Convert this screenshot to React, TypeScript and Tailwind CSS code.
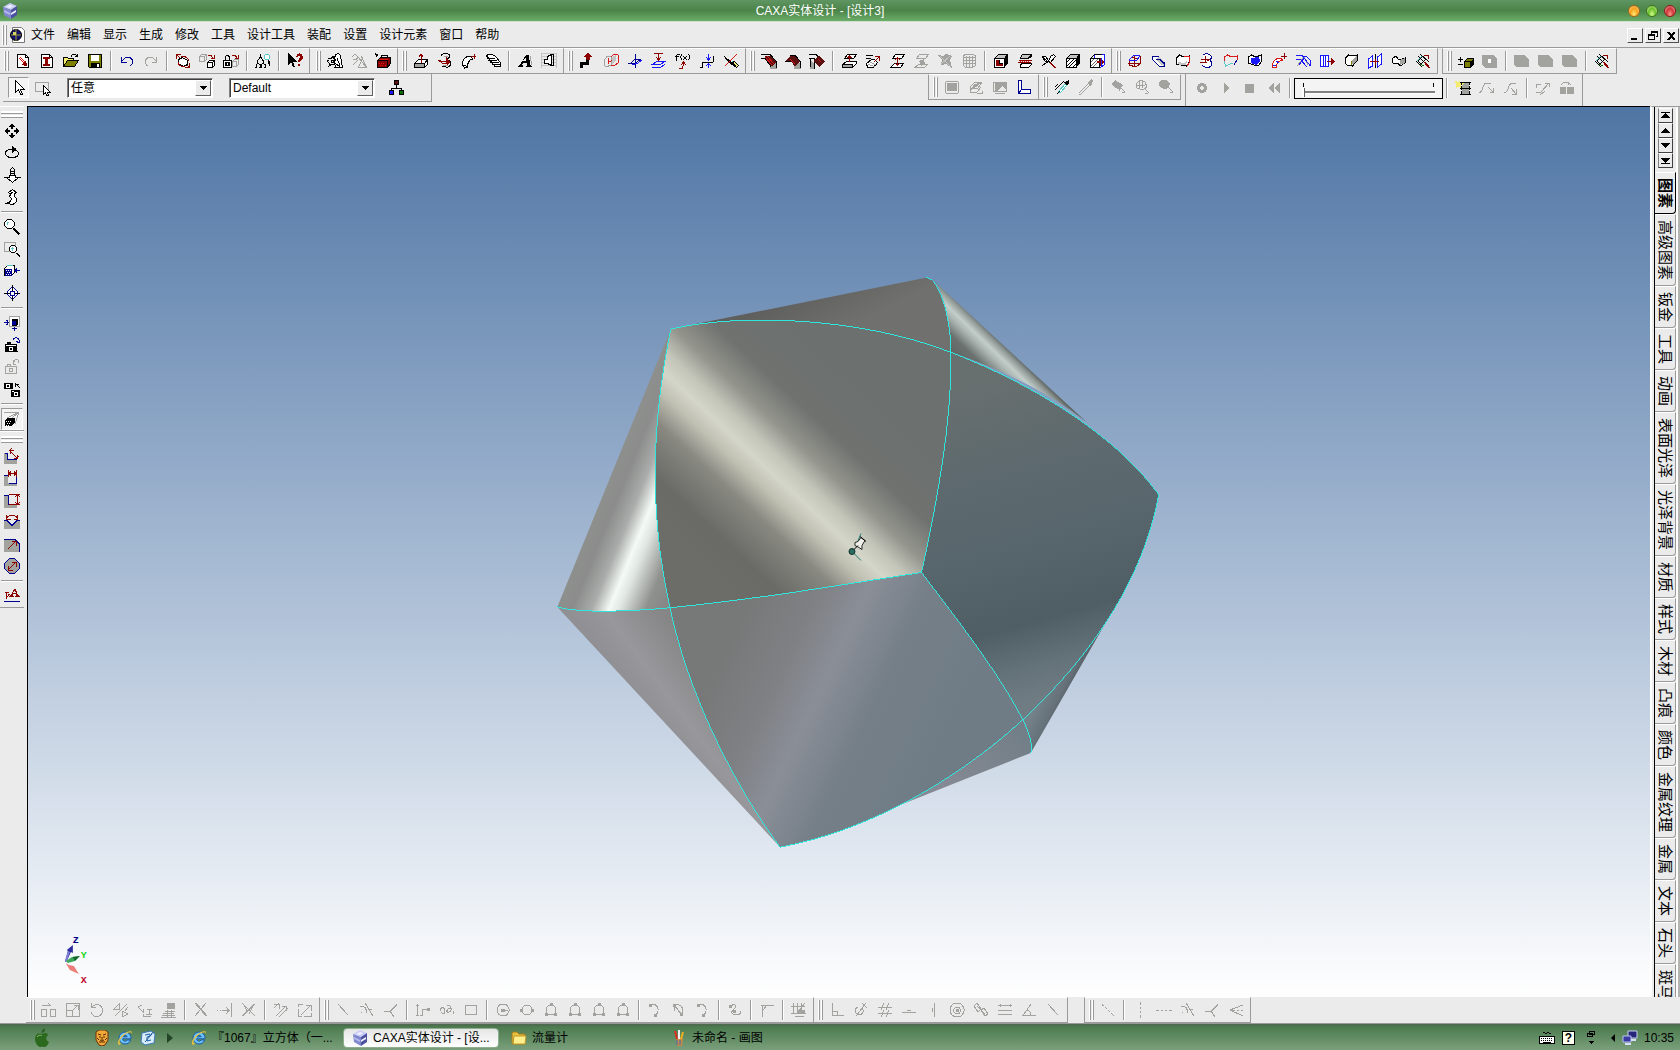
import { Fragment, useState } from "react";
import { clsx } from "clsx";

/* Glyph art: parts split by "|", each one is "<stroke><fill> <path>" on a 16x16 grid */
const INK: Record<string, string> = {
  "-": "none",
  k: "#000000",
  w: "#ffffff",
  r: "#8c0000",
  e: "#d81818",
  m: "#5c1010",
  b: "#000090",
  u: "#1818f8",
  n: "#a2a29e",
  l: "#c4c4c4",
  d: "#686868",
  y: "#808000",
  o: "#f4ec70",
  g: "#007000",
  c: "#58c8c8",
  p: "#a04070",
};

const art = {
  newDesign: "kw M2.5 1.5h8l3 3v10h-11z|k- M10.5 1.5v3h3|e- M4 5l6 6M5 4l6 6|-r M12 13l-6-1 5-5z",
  newSheet: "kw M2.5 1.5h8l3 3v10h-11z|k- M10.5 1.5v3h3|-r M4 4h7v2h-2v5h2v2h-7v-2h2v-5h-2z",
  open: "ko M.5 13.5v-9h4l1 1h5v3|ky M.5 13.5l4-6h11l-4 6z|k- M8 3.5c1-3 4-3 6-1M14.5 .5v3h-3",
  save: "ky M1.5 1.5h13v13h-12l-1-1z|-w M4 2h8v6h-8z|-k M4 10h9v4h-9z|-w M10 11h2v3h-2z",
  undo: "b- M2.5 4v5h5M2.5 9c2-4 6-6 9-4 3 2 3 5 0 8",
  redo: "n- M13.5 4v5h-5M13.5 9c-2-4-6-6-9-4-3 2-3 5 0 8",
  sizeBox: "r- M1.5 6V1.5H6M10 14.5h4.5V10M2 2l3 3M11 11l3 3|kw M3.5 6.5l4-2 5 3v4l-4 2-5-3z|r- M3 9c0 4 4 5 7 4M6 4c4-1 7 1 8 4",
  copyCubes: "n- M.5 3.5l2-2h5v5l-2 2h-5zM.5 3.5h5v5M5.5 3.5l2-2|kw M8.5 9.5l2-2h5v5l-2 2h-5z|k- M8.5 9.5h5v5M13.5 9.5l2-2|r- M9 2h3l2 4M12 5h3v-3",
  lockCube: "kw M.5 7.5h8v7h-8z|-k M2 9h5v4h-5z|-w M4 10h1v2h-1z|k- M2.5 7v-3c1-2 3-2 4 0v3|n- M9.5 8.5l2-2h4v5l-2 2h-4zM9.5 8.5h4v5|r- M9 2h3l2 3M12 5h3v-3",
  treeFind: "k- M5.5 1v3M5.5 4l-3 4v2M5.5 4l3 4v2M1 14.5v-3l2-1 2 1v3M6 14.5v-3l2-1 2 1v3M0 14.5h2M4 14.5h3M9 14.5h2|cw M10.5 1.5h3l1 1v3l-1 1h-3l-1-1v-3z|k- M13 7v4M14 8v5",
  help: "-k M1 0v12l3-3 2 5h2l-2-5h4z|-r M9 4c0-5 7-5 7 0 0 3-3 3-3 5h-2c0-3 2-3 2-5 0-2-2-1-2 0z|-r M11 11h2v2h-2z",
  gearCalc: "kw M7.5 5.5l1-4 3-1 2 2 2 12h-8l2-3-3-2z|k- M1 5l3 1 2-3 1 3 2 1-2 2 1 3-3-1-3 2 0-3-2-2 2-1M4 7h2v2H4zM10 5l3 8M8 10l5 4M1 14l4-3",
  gearGray: "n- M1 4l3-3 3 3-2 3-3-1M7 4l8 10M15.5 14.5h-8l4-9z|n- M2 12l5-5M10 3l4 8",
  toolbox: "kr M2.5 7.5l3-3h10v6l-3 4h-10z|k- M2.5 7.5h10v7|e- M4 6h9M4 10h1M6 10h1M8 10h1M5 12h1M7 12h1M10 12h1|k- M6 4.5v-2h6v2|-k M0 0l4 2-3 2z",
  extrude: "kw M1.5 10.5l4-4h9v5l-3 3h-10z|-n M2 11h9v3H2z|k- M1.5 10.5h10v4M11.5 10.500l3-4|r- M8 9V2M5.5 4.500L8 1l2.500 3.500|-r M8 2h1v8H8z",
  spin: "k- M4 3c0-3 9-3 9 0 0 2-3 2-3 4h2c3 2 2 8-3 7l-4-1|r- M1 7h2l2 3h6M9 4v5c-3 0-7 0-8-2|-r M10 6l4 3-4 3z|n- M6 12h5M7 3h4",
  sweep: "kw M1.5 12c0-6 3-9 8-9l2 3c-4 1-5 4-5 8l-3 1z|k- M1 12h3l2 2|r- M10 3.500h5M13.500 1v5",
  loft: "kw M1.5 3.5c1-3 6-3 9 0l5 6v4h-5z|k- M2 5h8M3 7h9M5 9h9M7 11h8M2 3l4 6M9 13h5",
  text: "-k M1 14v-1l2-1 6-10h3l1 10 2 1v1h-6v-1l1-1v-2h-4l-1 2 1 1v1zM6 8h3v-4z|n- M13.500 3l1 9",
  emboss: "l- M0 .5h16M0 3.500h16M0 6.500h16M0 9.500h16M0 12.500h16M.5 0v15M15.500 0v15|kw M3.5 6.5h3v-3l4-2v11l-4-2h-3z|k- M10.5 1.5h2v11h-2",
  bend: "-k M1 9h6v-3h3v6h-6v3h-3z|-r M7 6v-2h-3l5-4 5 4h-3v3h-3z",
  surfFold: "n- M1 8l3-5 4 1v8l-5 2-2-2z|e- M8 4l3-3 4 1v8l-4 3-3-1M5 5v6M5 9l6-2|-l M9 4l4-2v6l-4 3z",
  plane: "b- M1 10.500h7l5-4h-5M8.5 15V1M8 6l-4 4|u- M5 12l6-2 4-3",
  planes: "r- M3 .5h9M7.5 1v7M5 4l2.5 3L10 4|u- M1 11.5h8l5-3H6zM1 14.5h8l5-3",
  fx: "k- M1.500 8V3l1-2h2M0 3.5h4M6.5 1c-1 2-1 4 0 6M8 3l4 4M12 3L8 7M13.5 1c2 2 2 4 0 6|r- M8.5 9v4M6 12l2.5-3 2.5 3M4 15.500h3l1-2",
  align: "u- M9.500 1v5M7 4l2.500 3 2.500-3M9.500 15v-4M7 13l2.500-2 2.500 2|k- M1 14.5h2v-5h11M14.5 9V3",
  cut: "k- M1 3l12 11M2 5l10 9|e- M14 1L2 13|c- M9 8l5 6|ko M9.5 9.5l2-1 4 4-2 2z",
  fillet: "-n M9 9l6.5 1v6H9z|-m M4 3h6l5 6-4 5-6-8z|e- M4 4l7 8M6 3l7 8|k- M0 1.5h9l6.500 7V15M0 5.500h4l6 8",
  chamfer: "-n M9 9l6.500 1v6H9z|-m M1 8l5-6h5l4 6-5 6-4-6z|e- M5 6l5 5|k- M0 8.500h6M5 2.500h5l5.500 6V15",
  shellCut: "-n M1 7l5 4v5H1z|k- M0 1.5h7l3 3M0 5.500h5v10M1 5v9|-m M4 8l6-5 6 5-6 6z|e- M9 6l3 3",
  draft1: "kw M3.5 5.5l3-4h9l-3 4zM1.5 11.500l4-3h10v2l-4 4h-10z|-n M2 12h9v2H2z|k- M1.500 11.500h10v3|r- M8.5 9V3M6.5 5l2-2 2 2",
  draft2: "k- M1 2.5h7M1 5.500h5|kw M1.500 10.500l5-4h3l3 3-4 5h-6z|n- M3 11l7 3M5 9l6 3|r- M9 9l5-5M14.500 8V3.500H10",
  draft3: "kw M3.5 5.5l3-4h9l-3 4z|kw M1.5 14.5l4-4h9l-3 4z|r- M8.500 4v8M6 7l2.500-2L11 7M6 10l2.500 2 2.500-2",
  draft4: "n- M3.5 5.5l3-4h9l-3 4zM1.5 14.5l4-3h9l-3 3z|-n M6 8l5-2 1 5-4 2z",
  meshGray: "-n M1 2l5 1 3-2 6 2-2 4 2 8-6-4-5 1 1-5z|l- M3 3l10 10M13 3L4 11",
  cageGray: "n- M2.5 2.5l2-1h7l3 1v10l-3 2h-7l-2-2zM2.5 4.5h12M2.5 7.5h12M2.500 10.500h12M5.5 3v11M8.5 3v11M11.5 3v11",
  box1: "kl M1.5 5.5l4-4h9l-3 4z|-k M11 5l4-4v9l-4 5z|kw M1.5 5.5h10v9h-10z|-r M3 7h3v4h4v2H3z|k- M6.500 7v3.500h3",
  box2: "kl M3.5 4.5l2-3h9v2l-3 2h-8z|kw M3.5 11.500l2-1h9v1l-3 3h-8z|-k M11 4l4-3v3l-4 2z|r- M2 7.500h13M1 9.500h13|e- M3 8.500h1M5 8.500h1M7 8.500h1M9 8.500h1M11 8.500h1",
  knife: "kw M1.500 3.500l3 0 3 4-1 2-3-2zM9.500 3.500l3-2 2 2-5 6-2-1z|k- M3 5l3 3M1 13l5-4|r- M9 9l6 6M9 10l5 5",
  box4: "kl M1.5 5.5l4-4h9l-3 4z|-k M11 5l4-4v9l-4 5z|kw M1.5 5.5h10v9h-10z|k- M2 9l3-3M2 13l7-7M4 14l7-7M8 14l3-3",
  box5: "uw M5.5 1.5h10v10l-4 3h-4z|kw M1.5 5.5h9v9h-9z|k- M1.5 5.5l4-4h7|d- M2 9l3-3M2 13l7-7M4 14l6-6|-r M8 8h3V5l4 4-4 4v-3H8z|u- M12.5 5v9",
  net: "r- M2 7l5-5 6 1v8l-4 3-7-2zM1 10.500h12M7.500 2v11M4 4l8 2|u- M7 2l6 1-4 5-7-1z",
  sleeve: "bw M1.5 3.5h6l6 6v4h-5l-7-7z|-l M8 4l5 5v4l-5-3-3-4z|b- M5 6.500h4l5 5",
  patch: "kw M1.5 11V5l3-3 4 2 6-1v6l-3 4-5-1z|e- M9 3.5h5.5V9L12 13|-l M3 9l6 1 3-2-1 4H4z",
  spinSurf: "bw M4.500 2c2-3 9 0 8 3-2 2-2 3 0 4v3c0 3-8 3-9 0|r- M2 6.500h5M6.500 3v6M1 9.500h7|-r M7 6h4L9 9z",
  patch2: "e- M1.5 8V4l3-2 4 2 6-1v4|c- M1.5 8l1 5 7-3|b- M14 7l-3 5",
  patchFill: "kw M1.5 10V4l3-2 4 2 6-2v6l-3 5-5-1z|-u M4 5l8-1 1 4-4 4-5-2z",
  sweepSurf: "ew M1.5 14c0-6 3-9 8-9l2 2c-4 1-6 4-6 7z|u- M2 12l3 1M5 8l3 2|r- M10 3.500h6M13.500 0v6",
  bridge: "n- M2 13L9 4l4 8|u- M1 2.500h6l8 10M8 3h3l4 4v6M1 6h4l7 8M4 12l5-7",
  offset: "uw M1.5 2.5h5v11h-5zM6.5 2.5h3v11h-3|u- M4.500 3v10|r- M8 8.500h5|-r M12 5l4 3.500-4 3.500z",
  patchDark: "kw M2.5 10V5l3-3 3 1 6-1v5l-5 6-6-1z|-n M8 8l6-5v4l-4 5z|y- M8.500 8v4",
  mirror: "uw M1.5 6l4-3v10l-4 2zM10.500 4l4-3v10l-4 3z|k- M8.500 1v14|r- M3 8.500h9M8 6v6",
  ribbon: "kw M1 6l4-3 3 4 6-2v5l-5 3-2-3-5 0z|-n M9 7l5-2v5l-5 2z",
  cutSurf: "k- M3 3l11 11M1 8l6 6M5 1l9 8M3 8l5-5 3 3-5 5z|r- M9 2h4v4M10 9l5 6M9 9l5 6|c- M2 8l5-5|g- M5 11l4 2",
  plusBox: "k- M0 6.5h5M2.5 4v5M0 11.5h5|ky M6.5 8.5l3-3h6v6l-3 3h-6z|-k M12 9l4-4v6l-4 4z|k- M6.5 8.5h6",
  grayBlock: "-n M0 2h11l4 4v9H4l-4-3z|-w M6 6h3v4H6z",
  grayBlob: "-n M0 2h10l5 4v8H3l-3-2z",
  grayFrame: "-n M3 4h10v8H3z|n- M2 2.500h12M2 14.500h12M1.500 3v11M14.500 3v11",
  grayRotate: "n- M2 8l5-5h7l-4 6H2zM2 9v4h7l4-5M3 11l6-6M9 14.500h5v-3|-n M6 5l6-1-3 4-5 1z",
  grayFade: "n- M1.500 3.5h13v9H1.5zM3 14.500h10|-n M3 4h11v6l-4-3-5 5H3z",
  angleBar: "bw M2.5 1.5h3v9h9v4h-12z|b- M5.5 10.5l-3 4",
  pipette: "k- M1 8l3-3M1 11l9-9|cw M4.5 12.5l7-8 1 2-6 7h-2z|-k M10 3l3-1 2-2v4l-2 3-3-3z|k- M3 15l3-3",
  pipetteGray: "n- M1 14l9-9M3 15l9-9M1 15h2|-n M10 3l4-3 1 2-2 5-4-3z",
  blobA: "-n M5 1l5 3 3 2-3 5-4-2-5-4z|n- M10 8l5 5M12 13h3M9 12v-4",
  blobB: "n- M2 5l4-4 5 2 2 5-4 3-6-2zM5 2v7M8 2v7M2 6h9|n- M10 9l5 5M11 14h3",
  blobC: "-n M6 1c5 0 7 3 5 7-3 3-6 2-9 0-3-4 0-7 4-7z|n- M10 8l5 5M12 13h3",
  record: "-n M8 3a5 5 0 1 0 .1 0zM8 6a2 2 0 1 1-.1 0z",
  play: "-n M6 3l5 5-5 5z",
  stop: "-n M3 4h9v9H3z",
  rewind: "-n M8 3v10L2 8zM14 3v10L8 8z",
  film: "-n M6 2h9v12H6z|-o M0 1l3 1 2-2 1 3 3 0-2 3-1 2-3-1-2 1 0-3z|k- M5 2.500h11M5 8.500h11M5 14.500h11M6.5 3v11M14.5 3v11|w- M6 5.5h1M6 10.5h1M14 5.5h1M14 10.500h1",
  pathA: "n- M0 13c4 0 3-9 7-10h5M9 7l5 5M11 12h3V8",
  pathB: "n- M1 13c5 0 3-8 8-10h4M8 8l5 6M9 14h4v-5",
  pathC: "n- M1 4h5M1 4v4M1 12h5l8-9M10 3h4v4M5 15l5-4",
  pathD: "n- M2 5l3-3h4v3M9 2l3 3|-n M1 7h6v7H1zM8 7h7v7H8z",
  cursor: "kw M4.5 .5v12l3-3 2 5h2l-2-5h4z",
  boxCursor: "n- M.5 2.5h13v9H.5z|kw M8.5 5.5v9l2-2 1 3h2l-1-3h3z",
  hierarchy: "km M5.5 .5h4v4h-4z|k- M7.5 5v3M2.5 10V8.5h10V10|ku M.5 10.5h4v4h-4z|kg M10.5 10.5h4v4h-4z",
  move: "-k M8 0l3 4H9v2H7V4H5zM8 16l-3-4h2v-2h2v2h2zM0 8l4-3v2h2v2H4v2zM16 8l-4 3V9h-2V7h2V5z",
  orbit: "k- M9 4C4 4 1.500 6 1.500 8.500c0 5 13 5 13 0 0-2-2-3-4-4|k- M2 10c3 4 10 4 12 0|-k M8 1l5 3-5 4z",
  pan: "kw M8.5 15.5l-6-5h3v-2h6v2h3z|k- M2 10L0 11M15 10l2 1M6.5 6.5h4M6.5 4.5v-2l2-2 2 2v2h-4v4M10.5 4v4",
  walk: "kw M6.5 5.5l-2-2 4-3 4 3-2 1v3l2 2c1 2-1 5-4 6l-6-1 4-2 1-3-2-2z|k- M6 5l3-2",
  zoom: "k- M9 9l6 6M10 9l6 6M9 10l6 6|kw M3.5 .5h4l3 3v3l-3 3h-4l-3-3v-3z|c- M3 3.500h2M3.500 3v3",
  zoomWin: "n- M.5 1.5h11v9H.5z|k- M12 12l4 4M13 12l3 3|kw M7.5 4.5h3l2 2v3l-2 2h-3l-2-2v-3z|c- M7 7.500h3M8.500 6v4",
  lookAt: "kw M.5 5.5l3-3h7v7l-3 3h-7z|-b M1 6h7v7H1z|w- M2 7h1M4 7h1M6 7h1M3 9h1M5 9h1M2 11h1M4 11h1M6 11h1|c- M3 2.5h6|b- M11 7.500h5|-b M10 7.500l3-3v6z",
  target: "bw M7.500 2.500h2l4 4v3l-4 4h-2l-4-4v-3z|k- M8.5 0v6M8.5 10v6M0 8.5h6M10 8.5h6|b- M6.5 6.5h4v4h-4z",
  fitAll: "nw M5.5 1.5h10v10h-10z|-k M8 4h6v5l-2 2H8z|-b M8 6h4v4H8z|b- M0 7.500h4M2.5 5l2 2.500-2 2.500M10.5 12v4M8 13.5h5",
  cameraNext: "-k M1 7h2V5h4v2h6v8H1z|w- M2 8.5h10M5.5 10.5h3v3h-3z|k- M.5 14.5h13|b- M9 3c1-3 5-3 6 0v2M12 4l3 2 1-3",
  cameraGray: "n- M1.5 7.5h11v7h-11zM3 7V5h3v2M5.5 9.5h3v3h-3zM9 4l2-3c2-1 4 0 4 3M9 1v4h3",
  cameras: "-k M0 2h9v6H0zM7 9h9v7H7z|w- M2.5 3.5h3v3h-3zM8 10.5h2M10.5 11.5h3v3h-3z|k- M11 3h4M11 2l5 5M11 6V2",
  perspective: "n- M0 1.500h15M15 1L3 7M15 1l-4 12M15 1L8 7|-k M1 9l3-2h7v4l-3 4H1z|w- M2 10h1M4 10h1M6 10h1M3 12h1M5 12h1M2 14h1M4 14h1",
  dimLinear: "-n M0 5h4v6h9v5H0z|b- M.5 5.5h3v6h9|r- M6 3l7 7M6 6V2.500h4M10 10.500h3V7M8 0l-3 3M15 8l-3 3",
  dimH: "-n M0 5h4v8h9v3H0z|b- M4.5 13.5h8V5M0 5.5h4|r- M4.5 0v7M12.5 0v7M5 3.5h7M7 1.5l-2 2 2 2M10 1.5l2 2-2 2",
  dimV: "-n M0 4h4v8h9v4H0z|b- M4.5 3v9h9M0 3.5h4|r- M5 2.5h11M5 12.5h11M13.5 3v9M11 5l2.5-2L16 5M11 10l2.5 2 2.5-2",
  dimAngle: "-n M0 7h5l3 4 4-4h4v8H0z|b- M0 6.5h3l5 5 5-5h3|r- M2 5c2-5 10-5 12 0M2.500 1v4h4M13.500 1v4h-4",
  dimRadius: "-n M0 3h11l4 4v9H0z|b- M0 3.5h11l4 4v8|r- M4 13l8-8M8 5.500h4v4",
  dimDiameter: "bn M5.5 .5h5l5 5v5l-5 5h-5l-5-5v-5z|r- M4 12l8-8M8 4.500h4v4M4.500 8v4h4",
  annotate: "-r M5 9v-1l2-1 3-6h2l2 6 2 1v1h-5v-1l1-1-1-1H9v2l1 1zM9 5h3l-1-3z|r- M1 4.500h4M2.500 4v6l3-4|b- M0 13.5h16",
  bMove: "n- M1 3.5h8M7 1l3 3M.5 7.5h5v7h-5zM9.5 7.5h5v7h-5z",
  bScale: "n- M1.5 1.5h13v13h-13zM1.5 8.5h6v6M8 8l4-4M9 3.5h4v4",
  bRotate: "n- M3 5a6 6 0 1 1-1 5M2.500 1v4h4",
  bMirror: "n- M1 7l5-5v5zM2 14L14 2M9 15V9l6 3zM12 9l3-4",
  bOffset: "n- M1 5l5 5 0-3M1 5l4-2M6 12c0 4 2 2 8 2M9.5 7.5h5M12.500 7v5M9 12.500h6",
  bPattern: "-n M6 1h8v6H6z|n- M4 9.500h10M2 11.500h11M1 13.500h13M0 15.5h15M6 8v7M10 8v7",
  bTrim: "n- M2 1l11 13M3 1l11 13M13 1L2 14M12 12l2 2",
  bExtend: "n- M0 8.500h1M3 8.500h1M5 8.500h6M9 5l3 3.500L9 12M14.5 1v14",
  bBreak: "n- M1 1l13 13M14 2L2 14M13 2L1 14M3 3l3 6M8 12l4-8",
  bRef: "n- M1 2.500h5v4M1 6l5-5M3 14l9-9M6 15l9-9M9 4.500h4v4",
  bRefBox: "n- M1 2.500h5M1.500 5V2M4 13l9-9M9 3.500h5v5M1.500 7v7h3M7 14.500h7v-4",
  bLine: "n- M3 2l10 11",
  bTangent: "n- M1 5c5-2 7 2 6 6M6 1l8 13M2 10.500h1M11 7.500h2",
  bBranch: "n- M1 9.500h6l7-7M7 9l4 6",
  bPoly: "n- M2.5 2v12M1 3.5h3M1 13.5h3M5 13.5h2V7.500h7|-n M12 6h3v3h-3z",
  bSpline: "n- M1 9c1-5 5-4 5 0s-3 3-4 1M8 4c4-3 6 5 2 6s-2-4 2-4M14 9v3",
  bRect: "n- M2.5 3.5h11v9h-11z",
  bCircle: "n- M8 2a6 6 0 1 0 .1 0zM9 8.500h4|-n M6 7h4v3H6z",
  bCircle2: "n- M8 3a5 5 0 1 0 .1 0z|-n M1 7h3v3H1zM12 7h3v3h-3z",
  bCircle3: "n- M8 3a5 5 0 1 0 .1 0z|-n M7 1h3v3H7zM2 11h3v3H2zM11 11h3v3h-3z",
  bArc: "n- M4 3c7-2 9 5 5 10|-n M2 2h3v3H2zM7 12h3v3H7z",
  bArc2: "n- M4 3c7-2 9 5 7 9M4 4l6 8M3 4v5|-n M2 2h3v3H2zM9 11h3v3H9z",
  bCurve: "n- M4 4c4-3 7 0 3 3s-2 6 2 6 5-2 5-4|-n M2 3h3v3H2zM6 8h3v3H6z",
  bFillet: "n- M3.500 15V6c0-2 1-3 3-2.500h8M2 3.500h2M8 3l-4 5",
  bProject: "n- M0 4.500h14M2.500 1v10M6.500 1v10M10.500 1v10M0 11.500h15M4 14.500h9M8 9l6-8|-n M7 8h7v3H7z",
  bPerp: "n- M3.500 1v12.500H15M4 9.500h4V13",
  bTan: "n- M5 5a4 4 0 1 0 4 1M3 14L13 1M9 1l5 5",
  bParallel: "n- M1 5.500h14M1 11.500h14M4 8l3-7M9 8l3-7M4 15l3-7M9 15l3-7",
  bHoriz: "n- M1 10.500h14M6 8.500h4",
  bVert: "n- M9.500 1v14M7.500 6v4",
  bConc: "n- M8 1a7 7 0 1 0 .1 0zM8 5a3.500 3.500 0 1 0 .1 0z|-n M7 7h3v3H7z",
  bCollinear: "n- M1 4l3-3 4 6-3 3zM8 8l3-2 4 6-3 2zM4 4l8 8",
  bEqual: "n- M1 3.500h14M1 8.500h14M1 12.500h14M3 2v3M13 2v3",
  bAngle: "n- M10 2L2 13.500h13M6 8c3 1 4 3 4 5",
  bDash: "n- M2 2l2 2M5 5l2 2M8 8l2 2M11 11l3 3M2 3l1 1",
  bVDash: "n- M8.500 0v3M8.500 5v2M8.500 9v2M8.500 13v3",
  bHDash: "n- M0 8.500h3M5 8.500h2M9 8.500h2M13 8.500h3",
  bFan: "n- M15 3L2 8l13 6M4 8.500h3M9 8.500h2M13 8.500h2",
};

type GlyphName = keyof typeof art;

function Glyph({ name, className }: { name: GlyphName; className?: string }) {
  return (
    <svg viewBox="0 0 16 16" shapeRendering="crispEdges" className={clsx("h-4 w-4 shrink-0 overflow-visible", className)} aria-hidden="true">
      {art[name].split("|").map((part, i) => (
        <path key={i} d={part.slice(3)} stroke={INK[part[0]]} fill={INK[part[1]]} fillRule="evenodd" />
      ))}
    </svg>
  );
}

type Tool = GlyphName | "|";

const mainBars: Tool[][] = [
  ["newDesign", "newSheet", "open", "save", "|", "undo", "redo", "|", "sizeBox", "copyCubes", "lockCube", "|", "treeFind", "|", "help"],
  ["gearCalc", "gearGray", "toolbox"],
  ["extrude", "spin", "sweep", "loft", "|", "text", "emboss"],
  ["bend", "surfFold", "plane", "planes", "fx", "align", "cut"],
  ["fillet", "chamfer", "shellCut", "|", "draft1", "draft2", "draft3", "draft4", "meshGray", "cageGray", "|", "box1", "box2", "knife", "box4", "box5"],
  ["net", "sleeve", "patch", "spinSurf", "patch2", "patchFill", "sweepSurf", "bridge", "offset", "patchDark", "mirror", "ribbon", "cutSurf"],
];

const sketchBars: Tool[][] = [
  ["bMove", "bScale", "bRotate", "bMirror", "bOffset", "bPattern", "|", "bTrim", "bExtend", "bBreak", "|", "bRef", "bRefBox"],
  ["bLine", "bTangent", "bBranch", "|", "bPoly", "bSpline", "bRect", "|", "bCircle", "bCircle2", "bCircle3", "bCircle3", "bCircle3", "bCircle3", "|", "bArc", "bArc2", "bArc", "|", "bCurve", "|", "bFillet", "|", "bProject"],
  ["bPerp", "bTan", "bParallel", "bHoriz", "bVert", "bConc", "bCollinear", "bEqual", "bAngle", "bLine"],
];

const menus = ["文件", "编辑", "显示", "生成", "修改", "工具", "设计工具", "装配", "设置", "设计元素", "窗口", "帮助"];

const catalogs = ["图素", "高级图素", "钣金", "工具", "动画", "表面光泽", "光泽背景", "材质", "样式", "木材", "凸痕", "颜色", "金属纹理", "金属", "文本", "石头", "斑马"];

function Grip() {
  return (
    <div className="mr-0.5 flex h-5 shrink-0 gap-px">
      <div className="w-[2px] border-r border-[#9a9a9a] bg-white" />
      <div className="w-[2px] border-r border-[#9a9a9a] bg-white" />
    </div>
  );
}

function Sep() {
  return (
    <div className="flex w-2 shrink-0 justify-center">
      <div className="h-5 w-[2px] border-l border-[#9a9a9a] bg-white" />
    </div>
  );
}

function ToolButton({ name }: { name: GlyphName }) {
  return (
    <button type="button" aria-label={name} className="flex h-[22px] w-6 shrink-0 items-center justify-center">
      <Glyph name={name} />
    </button>
  );
}

function Tools({ tools }: { tools: Tool[] }) {
  return (
    <>
      {tools.map((t, i) => (
        <Fragment key={i}>{t === "|" ? <Sep /> : <ToolButton name={t} />}</Fragment>
      ))}
    </>
  );
}

function Bar({ tools, className }: { tools: Tool[]; className?: string }) {
  return (
    <div className={clsx("flex h-[26px] shrink-0 items-center border-t border-r border-b border-t-white border-r-[#9a9a9a] border-b-[#9a9a9a] pr-[2px] pl-1", className)}>
      <Grip />
      <Tools tools={tools} />
    </div>
  );
}

function Combo({ label, value, options }: { label: string; value: string; options: string[] }) {
  return (
    <div className="relative flex h-5 w-[146px] shrink-0 border border-t-[#808080] border-r-white border-b-white border-l-[#808080] bg-white">
      <select aria-label={label} defaultValue={value} className="w-full appearance-none border-t border-l border-[#404040] bg-white pl-0.5 text-xs leading-4 outline-none">
        {options.map((o) => (
          <option key={o}>{o}</option>
        ))}
      </select>
      <span className="pointer-events-none absolute top-px right-px bottom-px flex w-4 items-center justify-center border border-t-white border-r-[#606060] border-b-[#606060] border-l-white bg-[#ebebeb]">
        <svg viewBox="0 0 7 4" className="h-1 w-[7px]" shapeRendering="crispEdges">
          <path d="M0 0h7L3.500 4z" />
        </svg>
      </span>
    </div>
  );
}

function Cube({ className }: { className?: string }) {
  return (
    <svg viewBox="0 0 16 16" className={clsx("h-4 w-4 shrink-0", className)} aria-hidden="true">
      <path d="M1 4l7-4 7 3-6 4z" fill="#c9cdf6" />
      <path d="M1 4l8 3v9l-7-4z" fill="#8288cf" />
      <path d="M9 7l6-4v9l-6 4z" fill="#4d52a0" />
      <path d="M4 4l4-2 3 1-3 2zM9 10l5-3v2l-5 3z" fill="#eef0ff" />
      <path d="M2 7l6 3v2L2 9z" fill="#b4b9ee" />
    </svg>
  );
}

function IELogo() {
  return (
    <svg viewBox="0 0 16 16" className="h-4 w-4 shrink-0" aria-hidden="true">
      <path d="M8 2a6 6 0 1 0 5.700 8H10a2.300 2.300 0 0 1-4.300-1.200H14A6 6 0 0 0 8 2zM5.800 6.800a2.300 2.300 0 0 1 4.400 0z" fill="#6cc0fa" stroke="#1a5ca8" />
      <path d="M1.500 14.500C-.5 12 4 4.500 10 2c4-1.700 5.600-.6 4.500 2 .2-2-1.500-2-4-1C6 5 2 10.500 2.500 12.800c.2.900 1.200.8 2.200.4-1.500 1.300-2.700 1.900-3.200 1.300z" fill="#f2c53c" />
    </svg>
  );
}

function TitleBar() {
  return (
    <header className="relative flex h-[22px] shrink-0 items-center justify-center border-b border-[#cfe0cf] bg-linear-to-b from-[#5f9562] via-[#4b8448] to-[#6bad69] pr-10 text-xs text-white">
      <Cube className="absolute left-[2px]" />
      <h1>CAXA实体设计 - [设计3]</h1>
      <div className="absolute right-[4px] flex gap-1.5">
        <button type="button" aria-label="最小化" className="h-3 w-3 rounded-full border border-[#a86414] bg-radial-[at_50%_85%] from-[#ffe97a] via-[#f7a21c] to-[#ffd9a0]" />
        <button type="button" aria-label="最大化" className="h-3 w-3 rounded-full border border-[#3c7414] bg-radial-[at_50%_85%] from-[#d2ff8a] via-[#6cbf2c] to-[#d8f4c0]" />
        <button type="button" aria-label="关闭" className="h-3 w-3 rounded-full border border-[#8a1c1c] bg-radial-[at_50%_85%] from-[#ff9a8a] via-[#cf3438] to-[#f8c8c8]" />
      </div>
    </header>
  );
}

function MenuBar() {
  const windowButtons = [
    ["最小化窗口", "M3 9h6v2H3z"],
    ["还原窗口", "M5 2h7v6h-2V7h1V4H6v1H5zM2 5h7v6H2zM3 7v3h5V7z"],
    ["关闭窗口", "M3 3h2l2 2 2-2h2v1L8 7l3 3v1H9L7 9l-2 2H3v-1l3-3-3-3z"],
  ];
  return (
    <div className="flex h-[26px] shrink-0 items-center border-b border-[#9a9a9a] pt-px pl-[2px]">
      <Grip />
      <svg viewBox="0 0 16 16" className="h-4 w-4" aria-hidden="true">
        <path d="M3.500.5h9l3 3v12h-12z" fill="#fff" stroke="#777" />
        <circle cx="7" cy="8" r="5.500" fill="#14146c" stroke="#000" />
        <path d="M2 8h10M7 2v12" stroke="#9a9a30" />
        <path d="M4 5h3v3H4z" fill="#d8d860" />
      </svg>
      <nav className="flex">
        {menus.map((m) => (
          <button key={m} type="button" className="px-1.5 text-xs whitespace-nowrap">
            {m}
          </button>
        ))}
      </nav>
      <div className="mr-px ml-auto flex gap-0.5">
        {windowButtons.map(([label, d]) => (
          <button key={label} type="button" aria-label={label} className="flex h-[15px] w-4 items-center justify-center border border-t-white border-r-[#505050] border-b-[#505050] border-l-white">
            <svg viewBox="0 0 14 13" className="h-[13px] w-[14px] shrink-0" shapeRendering="crispEdges">
              <path d={d} fillRule="evenodd" />
            </svg>
          </button>
        ))}
      </div>
    </div>
  );
}

function SecondRow() {
  const [frame, setFrame] = useState(0);
  return (
    <div className="flex h-8 shrink-0 items-start overflow-hidden">
      <div className="ml-[3px] flex h-7 w-[429px] shrink-0 items-center border-r border-b border-[#9a9a9a] pl-[5px]">
        <button type="button" aria-label="选择" className="flex h-[21px] w-[21px] items-center justify-center border border-t-[#9a9a9a] border-r-white border-b-white border-l-[#9a9a9a] bg-[#f4f4f4]">
          <Glyph name="cursor" />
        </button>
        <button type="button" aria-label="框选" className="ml-1 flex h-5 w-5 items-center justify-center">
          <Glyph name="boxCursor" />
        </button>
        <div className="ml-3.5 flex gap-4">
          <Combo label="选择过滤" value="任意" options={["任意", "零件", "面", "边"]} />
          <Combo label="配置" value="Default" options={["Default"]} />
        </div>
        <button type="button" aria-label="设计树" className="ml-3 flex h-5 w-5 items-center justify-center">
          <Glyph name="hierarchy" />
        </button>
      </div>
      <div className="ml-[496px] flex shrink-0 items-start">
        <Bar tools={["grayFrame", "grayRotate", "grayFade", "angleBar"]} className="border-l border-l-[#9a9a9a]" />
        <Bar tools={["pipette", "pipetteGray", "|", "blobA", "blobB", "blobC"]} />
        <div className="ml-1 flex h-8 items-center border-r border-l border-[#9a9a9a] pr-[3px] pb-1 pl-1">
          <Tools tools={["record", "play", "stop", "rewind", "|"]} />
          <div className="flex h-[21px] w-[149px] shrink-0 flex-col border border-black bg-[#f4f4f4] px-[7px]">
            <div className="mt-1 flex h-1 shrink-0 justify-between px-px">
              <div className="w-px bg-black" />
              <div className="w-px bg-black" />
            </div>
            <input
              type="range"
              aria-label="动画时间"
              min={0}
              max={100}
              value={frame}
              onChange={(e) => setFrame(Number(e.target.value))}
              className="h-[11px] w-full appearance-none bg-transparent [&::-webkit-slider-runnable-track]:h-[3px] [&::-webkit-slider-runnable-track]:border-b [&::-webkit-slider-runnable-track]:border-white [&::-webkit-slider-runnable-track]:bg-[#808080] [&::-webkit-slider-thumb]:-mt-[3px] [&::-webkit-slider-thumb]:h-[9px] [&::-webkit-slider-thumb]:w-[3px] [&::-webkit-slider-thumb]:appearance-none [&::-webkit-slider-thumb]:border-r [&::-webkit-slider-thumb]:border-[#606060] [&::-webkit-slider-thumb]:bg-white"
            />
          </div>
          <Tools tools={["|", "film", "pathA", "pathB", "|", "pathC", "pathD"]} />
        </div>
      </div>
    </div>
  );
}

const cameraTools: Tool[] = ["move", "orbit", "pan", "walk", "|", "zoom", "zoomWin", "lookAt", "target", "|", "fitAll", "cameraNext", "cameraGray", "cameras", "|", "perspective"];
const dimensionTools: Tool[] = ["dimLinear", "dimH", "dimV", "dimAngle", "dimRadius", "dimDiameter", "|", "annotate"];

function SideBar({ tools }: { tools: Tool[] }) {
  return (
    <div className="flex flex-col items-center border-t border-b border-t-white border-b-[#9a9a9a] pt-1">
      <div className="mb-px h-[3px] w-[22px] border-b border-[#9a9a9a] bg-white" />
      <div className="mb-0.5 h-[3px] w-[22px] border-b border-[#9a9a9a] bg-white" />
      {tools.map((t, i) =>
        t === "|" ? (
          <div key={i} className="flex h-2 w-[22px] items-center">
            <div className="h-[2px] w-full border-t border-[#9a9a9a] bg-white" />
          </div>
        ) : (
          <button
            key={i}
            type="button"
            aria-label={t}
            className={clsx(
              "flex h-[22px] w-[22px] items-center justify-center",
              t === "perspective" && "border border-t-[#9a9a9a] border-r-white border-b-white border-l-[#9a9a9a] bg-[#f4f4f4]",
            )}
          >
            <Glyph name={t} />
          </button>
        ),
      )}
    </div>
  );
}

/* Outline pieces of the solid, shared between the faces and the edge curves */
const edges = [
  "M670.600 329.300C741 313 861 317.600 951 352.600C1030 383 1115 434 1159 495",
  "M925.700 278C938 276 951 315 951 352.600C952 415 940 490 921.600 573",
  "M670.600 329.300C652 420 648 510 669.800 608.300C687 690 730 780 780 848",
  "M557 607.500C580 614 630 612 669.800 608.300C754 600 838 586 921.600 573",
  "M921.600 573C952 613 999 673 1023 720.400C1030 735 1033 745 1031 753.700",
  "M1159 495C1145 575 1095 654 1023 720.400C955 783 866 832 780 848",
];

const faces = [
  { id: "top", from: [790, 295], to: [815, 345], stops: "0 #5f605d,35 #656663,100 #70716f", d: "M670.600 329.300L925.700 278C938 276 951 315 951 352.600C861 317.600 741 313 670.600 329.300z" },
  { id: "topRight", from: [1000, 340], to: [972, 369], stops: "0 #5c6361,12 #8f9895,30 #c3cecb,46 #a9b3b0,75 #6a716e,100 #626866", d: "M931 278.500L1087 422.600C1050 393 1000 369 951 352.600C951 320 942 285 931 278.500z" },
  { id: "left", from: [585, 535], to: [678, 573], stops: "0 #8e908e,16 #8b8c8b,34 #a9acaa,50 #f4faf5,60 #dfe5e0,84 #8f918f,100 #868786", d: "M670.600 329.300L557 607.500C580 614 630 612 669.800 608.300C648 510 652 420 670.600 329.300z" },
  { id: "lowerLeft", from: [690, 650], to: [630, 695], stops: "0 #868687,60 #98979b,100 #8f8f94", d: "M557 607.500L780 848C730 780 687 690 669.800 608.300C630 612 580 614 557 607.500z" },
  { id: "rightRim", from: [1050, 680], to: [1078, 694], stops: "0 #748189,50 #66717a,100 #4c5159", d: "M1107 621.700L1031 753.700C1033 745 1030 735 1023 720.400C1060 686 1087 654 1107 621.700z" },
  { id: "bottomRim", from: [950, 790], to: [1020, 735], stops: "0 #858993,100 #737f88", d: "M887 811L1031 753.700C1033 745 1030 735 1023 720.400C985 756 935 790 887 811z" },
  { id: "front", from: [670, 543], to: [834, 367], stops: "0 #6c6c69,16 #6a6a67,33 #898982,43 #bfbfb2,50 #d5d6ca,57 #c4c5b9,66 #94958d,79 #6f726f,100 #6c7170", d: "M670.600 329.300C741 313 861 317.600 951 352.600C952 415 940 490 921.600 573C838 586 754 600 669.800 608.300C648 510 652 420 670.600 329.300z" },
  { id: "right", from: [990, 380], to: [1075, 690], stops: "0 #686f6f,25 #5e6a6e,50 #58666d,76 #4f5e64,90 #64727a,100 #6f7c84", d: "M951 352.600C1030 383 1115 434 1159 495C1145 575 1095 654 1023 720.400C999 673 952 613 921.600 573C940 490 952 415 951 352.600z" },
  { id: "bottom", from: [725, 657], to: [951, 765], stops: "0 #777979,22 #7e8083,40 #8a8e97,62 #757f88,100 #6f7c85", d: "M669.800 608.300C754 600 838 586 921.600 573C952 613 999 673 1023 720.400C955 783 866 832 780 848C730 780 687 690 669.800 608.300z" },
];

function Viewport() {
  return (
    <main className="min-w-0 flex-1 border-t border-l border-black bg-linear-to-b from-[#4f75a4] to-white">
      <svg viewBox="28 107 1622 891" className="h-full w-full" aria-label="设计3">
        <defs>
          {faces.map((f) => (
            <linearGradient key={f.id} id={f.id} gradientUnits="userSpaceOnUse" x1={f.from[0]} y1={f.from[1]} x2={f.to[0]} y2={f.to[1]}>
              {f.stops.split(",").map((s) => (
                <stop key={s} offset={s.split(" ")[0] + "%"} stopColor={s.split(" ")[1]} />
              ))}
            </linearGradient>
          ))}
        </defs>
        {faces.map((f) => (
          <path key={f.id} d={f.d} fill={`url(#${f.id})`} />
        ))}
        {edges.map((d) => (
          <path key={d} d={d} fill="none" stroke="#2ee6dc" shapeRendering="crispEdges" />
        ))}

        {/* anchor pin */}
        <g>
          <path d="M861 534l-4 10M852 552l9 9" stroke="#1c7c70" fill="none" />
          <path d="M855 543l3-1 3-4 4 3-3 5 0 4-3-2-4-2z" fill="#f0f0ea" stroke="#222" />
          <path d="M852 552l6-6M860 537l6 5" stroke="#000" />
          <circle cx="852" cy="552" r="3" fill="#2c6c60" stroke="#12312c" />
        </g>

        {/* axis triad */}
        <path d="M64 963l3-11-1-1 6-5v8l-2-1-4 9z" fill="#2c2c9c" />
        <path d="M64 963l3-11 2 1-3 9z" fill="#8080d8" />
        <path d="M65 962l6-4 8-1-5 5-7 2z" fill="#3ca85c" />
        <path d="M72 958l7-1-5 5z" fill="#106428" />
        <path d="M65 964l3 2 5 1 5 8-9-4-3-5z" fill="#ee7c78" />
        <text x="72" y="944" className="fill-[#000080] font-mono text-[10px] font-bold">Z</text>
        <text x="80" y="959" className="fill-[#20d820] font-mono text-[10px] font-bold">Y</text>
        <text x="80" y="984" className="fill-[#c00020] font-mono text-[10px] font-bold">X</text>
      </svg>
    </main>
  );
}

function CatalogTabs() {
  const [active, setActive] = useState("图素");
  const arrows = [
    ["首个", "M2 2h9v1H2zM6 3h1l4 5H2z"],
    ["上一个", "M6 3h1l4 5H2z"],
    ["下一个", "M2 3h9L7 8H6z"],
    ["末个", "M2 3h9L7 8H6zM2 8h9v1H2z"],
  ];
  return (
    <aside className="flex w-[30px] shrink-0 border-t border-l-2 border-t-[#9a9a9a] border-l-white bg-[#ebebeb]">
      <div className="ml-[2px] flex min-h-0 w-[22px] flex-col overflow-hidden border-l border-black">
        <div className="flex shrink-0 flex-col items-center pt-px pb-1">
          {arrows.map(([label, d]) => (
            <button key={label} type="button" aria-label={label} className="flex h-[15px] w-[15px] items-center justify-center border border-t-white border-r-[#404040] border-b-[#404040] border-l-[#808080]">
              <svg viewBox="0 0 13 11" className="h-[11px] w-[13px] shrink-0" shapeRendering="crispEdges">
                <path d={d} />
              </svg>
            </button>
          ))}
        </div>
        {catalogs.map((c) => (
          <button
            key={c}
            type="button"
            onClick={() => setActive(c)}
            className={clsx(
              "flex w-[21px] shrink-0 items-center justify-center rounded-br border-t border-r border-b border-t-white px-[5px] text-[15px] leading-5 [text-orientation:sideways] [writing-mode:vertical-rl]",
              active === c ? "border-r-black border-b-black font-bold" : "border-r-[#9a9a9a] border-b-[#9a9a9a]",
            )}
          >
            {c}
          </button>
        ))}
      </div>
      <div className="flex-1 border-l-2 border-white bg-[#b4b4b0]" />
    </aside>
  );
}

function TaskBar() {
  return (
    <footer className="flex h-[26px] shrink-0 items-center border-t-2 border-[#4e6c50] bg-linear-to-b from-[#4b7a4e] to-[#7aa07b] pr-1.5 text-xs text-black">
      <button type="button" aria-label="开始" className="ml-[34px]">
        <svg viewBox="0 0 16 20" className="h-5 w-4">
          <path d="M8 6c2-1.500 5-1.200 6.300 1-3 2-2.500 5.500.7 7-1.500 4-3.500 5.500-5 5-1.200-.5-2.300-.5-3.500 0C4.500 19.500 1 15 1 11c0-5 4-6.500 7-5z" fill="#2b6a1e" />
          <path d="M7.500 5C7.500 2.500 9 1 11 .5c.2 2.300-1.200 4.200-3.500 4.500z" fill="#255c1a" />
          <path d="M3 9c1-2 3-2 5-1.500" stroke="#7cb060" fill="none" />
        </svg>
      </button>
      <div className="ml-[44px] flex items-center gap-[7px]">
        <svg viewBox="0 0 16 16" className="h-4 w-4" aria-hidden="true">
          <path d="M2 2l3-2h6l3 2v8l-3 5-3 1-3-1-3-5z" fill="#f0a838" stroke="#6c3408" />
          <path d="M4 4l3 1M12 4L9 5M5 7h2M9 7h2M8 7v3M5 12h6M6 10l2 1 2-1M3 8l2 2M13 8l-2 2" stroke="#5a2a04" fill="none" />
        </svg>
        <IELogo />
        <svg viewBox="0 0 16 16" className="h-4 w-4" aria-hidden="true">
          <path d="M2 3l9-2 4 3-1 9-9 2-4-3z" fill="#d8ecfa" stroke="#3a78b4" />
          <path d="M5 5l5-1v2L7 7v4l4-1M11 4l3-2M5 12l7-8" stroke="#1c5ca0" fill="none" />
        </svg>
        <svg viewBox="0 0 6 10" className="ml-1 h-[10px] w-1.5" aria-hidden="true">
          <path d="M0 0l6 5-6 5z" fill="#244428" />
        </svg>
      </div>
      <div className="ml-[10px] flex gap-1">
        <button type="button" className="flex h-5 w-[156px] items-center gap-[5px] pl-2 whitespace-nowrap">
          <IELogo />
          <span>『1067』立方体（一...</span>
        </button>
        <button type="button" className="flex h-5 w-[156px] items-center gap-[5px] rounded-sm border border-[#8fae90] bg-linear-to-b from-[#e4e6e4] to-white pl-2 whitespace-nowrap">
          <Cube />
          CAXA实体设计 - [设...
        </button>
        <button type="button" className="flex h-5 w-[156px] items-center gap-[5px] pl-2">
          <svg viewBox="0 0 16 16" className="h-4 w-4" aria-hidden="true">
            <path d="M1 3l1-1h4l2 2h6v10H2l-1-1z" fill="#e8c040" stroke="#a07818" />
            <path d="M3 6h12l-1 8H2z" fill="#fdf08c" stroke="#c09828" />
          </svg>
          流量计
        </button>
        <button type="button" className="flex h-5 w-[156px] items-center gap-[5px] pl-2">
          <svg viewBox="0 0 16 16" className="h-4 w-4" aria-hidden="true">
            <path d="M5 8h7l-1 8H6z" fill="#c88a48" />
            <path d="M4 1l2 8" stroke="#d83020" strokeWidth="2" />
            <path d="M8 0v9" stroke="#f0f0f0" strokeWidth="2" />
            <path d="M12 2l-2 7" stroke="#e8b020" strokeWidth="2" />
            <path d="M6 10v5M9 10v5" stroke="#3868b0" />
          </svg>
          未命名 - 画图
        </button>
      </div>
      <div className="ml-auto flex items-center">
        <svg viewBox="0 0 16 14" className="h-[14px] w-4" shapeRendering="crispEdges" aria-hidden="true">
          <path d="M4 1.500h2M6 2.500h2M8 1.500h2M10 2.500h2" stroke="#000" />
          <path d="M.5 5.500h15v7H.5z" fill="#fff" stroke="#000" />
          <path d="M2 7.500h12M2 9.500h12" stroke="#000" strokeDasharray="1 1" />
          <path d="M4 11.500h8" stroke="#000" />
        </svg>
        <span className="ml-[7px] flex h-[14px] w-[13px] items-center justify-center border border-black bg-[#fffff0] text-xs leading-3 font-bold">?</span>
        <svg viewBox="0 0 10 16" className="ml-[11px] h-4 w-[10px]" shapeRendering="crispEdges" aria-hidden="true">
          <path d="M3.500 1.500h5v3h-5zM1.500 3.500h5v3h-5z" fill="none" stroke="#000" />
          <path d="M2 11h6l-3 3z" />
        </svg>
        <svg viewBox="0 0 4 8" className="ml-[15px] h-2 w-1" aria-hidden="true">
          <path d="M4 0v8L0 4z" />
        </svg>
        <svg viewBox="0 0 16 16" className="ml-[7px] h-4 w-4" aria-hidden="true">
          <path d="M6 1h9v7H6z" fill="#26267c" stroke="#c8d0f0" />
          <path d="M1 6h8v6H1z" fill="#3a3aa0" stroke="#b8c4f0" />
          <path d="M3 14h6M9 10h5" stroke="#d8e0f8" strokeWidth="2" />
        </svg>
        <time className="ml-1.5">10:35</time>
      </div>
    </footer>
  );
}

export default function App() {
  return (
    <div className="flex h-screen flex-col overflow-hidden bg-[#ebebeb] font-['Liberation_Sans','Noto_Sans_CJK_SC',sans-serif] text-black select-none">
      <TitleBar />
      <MenuBar />

      <div className="flex shrink-0 overflow-hidden">
        {mainBars.map((tools, i) => (
          <Bar key={i} tools={tools} className={i === 1 ? "pl-1.5" : undefined} />
        ))}
        <Bar tools={["plusBox", "grayBlock", "|", "grayBlob", "grayBlob", "grayBlob", "|", "cutSurf"]} className="ml-1 border-l border-l-[#9a9a9a]" />
      </div>
      <SecondRow />

      <div className="flex min-h-0 flex-1">
        <div className="w-[27px] shrink-0">
          <div className="w-6">
            <SideBar tools={cameraTools} />
            <SideBar tools={dimensionTools} />
          </div>
        </div>
        <Viewport />
        <CatalogTabs />
      </div>

      <div className="flex shrink-0 overflow-hidden border-b border-[#9a9a9a] pl-[26px]">
        {sketchBars.map((tools, i) => (
          <Bar key={i} tools={tools} />
        ))}
        <Bar tools={["bDash", "|", "bVDash", "bHDash", "bTangent", "bBranch", "bFan"]} className="ml-4 border-l border-l-[#9a9a9a]" />
      </div>
      <TaskBar />
    </div>
  );
}
